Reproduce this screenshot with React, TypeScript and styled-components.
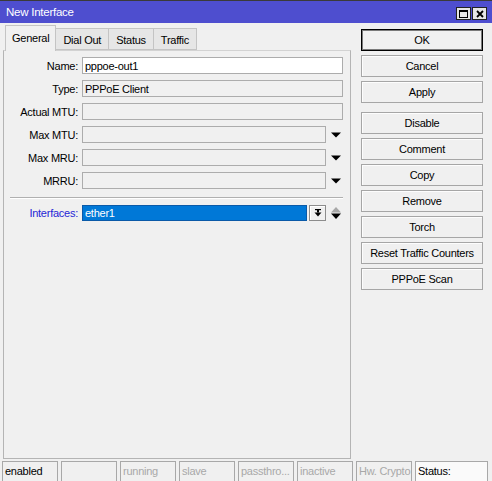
import React from "react";
import styled, { createGlobalStyle } from "styled-components";

const GlobalStyle = createGlobalStyle`
  html, body {
    margin: 0;
    padding: 0;
    background: #f0f0f0;
  }
  body {
    font-family: "Liberation Sans", Arial, sans-serif;
    font-size: 11px;
    letter-spacing: -0.25px;
    color: #000;
  }
  svg {
    display: block;
    flex-shrink: 0;
  }
`;

const Window = styled.div`
  width: 492px;
  height: 481px;
  display: flex;
  flex-direction: column;
  overflow: hidden;
  background: #f0f0f0;
`;

const TitleBar = styled.div`
  height: 22px;
  border-top: 1px solid #3a3a3a;
  background: #4e4ecf;
  display: flex;
  align-items: center;
  justify-content: space-between;
  padding: 0 5px 0 6px;
`;

const Title = styled.span`
  color: #fff;
  font-size: 11.5px;
  margin-top: -1px;
`;

const TitleButtons = styled.div`
  display: flex;
  gap: 1px;
  margin-top: 3px;
`;

const TitleBtn = styled.div`
  width: 13px;
  height: 11px;
  border: 1px solid #222;
  background: #e6e6e6;
  display: flex;
  align-items: center;
  justify-content: center;
`;

const Body = styled.div`
  flex: 1;
  display: flex;
  min-height: 0;
`;

const LeftColumn = styled.div`
  width: 348px;
  margin-left: 3px;
  padding: 1px 0 2px;
  display: flex;
  flex-direction: column;
`;

const TabStrip = styled.div`
  height: 26px;
  display: flex;
  align-items: flex-end;
  padding-left: 2px;
`;

const Tab = styled.div<{ $active?: boolean }>`
  position: relative;
  z-index: ${(p) => (p.$active ? 2 : 1)};
  height: ${(p) => (p.$active ? "26px" : "22px")};
  margin-bottom: ${(p) => (p.$active ? "-1px" : "0")};
  margin-left: ${(p) => (p.$active ? "0" : "-1px")};
  padding: ${(p) => (p.$active ? "0 6px 2px" : "1px 7px 0 7px")};
  display: flex;
  align-items: center;
  box-sizing: border-box;
  border: 1px solid #c4c4c4;
  border-bottom: ${(p) => (p.$active ? "none" : "1px solid #c4c4c4")};
  background: ${(p) => (p.$active ? "#f0f0f0" : "#e6e6e6")};
  font-size: 11px;
`;

const Panel = styled.div`
  flex: 1;
  border: 1px solid #b4b4b4;
  border-top-color: #d2d2d2;
  padding: 6px 7px 0 0;
  display: flex;
  flex-direction: column;
`;

const FieldRow = styled.div<{ $gap?: number; $height?: number }>`
  display: flex;
  align-items: center;
  height: ${(p) => p.$height ?? 17}px;
  margin-top: ${(p) => p.$gap ?? 6}px;
`;

const Label = styled.div<{ $accent?: boolean }>`
  width: 74px;
  flex-shrink: 0;
  margin-right: 4px;
  text-align: right;
  white-space: nowrap;
  color: ${(p) => (p.$accent ? "#2626d6" : "#000")};
`;

const Input = styled.div<{ $editable?: boolean }>`
  flex: 1;
  height: 100%;
  box-sizing: border-box;
  border: 1px solid #acacac;
  background: ${(p) => (p.$editable ? "#fff" : "#f0f0f0")};
  padding-left: 2px;
  display: flex;
  align-items: center;
  white-space: nowrap;
`;

const ArrowSlot = styled.div`
  width: 17px;
  flex-shrink: 0;
  height: 100%;
  display: flex;
  align-items: center;
  padding-left: 5px;
  box-sizing: border-box;
`;

const Separator = styled.div`
  margin: 8px 0 0 6px;
  height: 1px;
  background: #b0b0b0;
  border-bottom: 1px solid #fff;
`;

const SelectField = styled.div`
  flex: 1;
  height: 100%;
  box-sizing: border-box;
  border: 1px solid #0a5aa8;
  background: #0078d7;
  color: #fff;
  padding-left: 2px;
  display: flex;
  align-items: center;
`;

const PickButton = styled.div`
  width: 17px;
  flex-shrink: 0;
  height: 100%;
  margin-left: 2px;
  box-sizing: border-box;
  border: 1px solid #8c8c8c;
  box-shadow: inset 1px 1px 0 #fff;
  background: #f0f0f0;
  display: flex;
  align-items: center;
  justify-content: center;
`;

const Spinner = styled.div`
  width: 17px;
  flex-shrink: 0;
  height: 100%;
  display: flex;
  align-items: center;
  padding-left: 5px;
  box-sizing: border-box;
`;

const ButtonColumn = styled.div`
  width: 122px;
  margin-left: 10px;
  padding-top: 6px;
  display: flex;
  flex-direction: column;
`;

const ButtonGroup = styled.div<{ $spaced?: boolean }>`
  display: flex;
  flex-direction: column;
  gap: 4px;
  margin-top: ${(p) => (p.$spaced ? "9px" : "0")};
`;

const Button = styled.div<{ $default?: boolean }>`
  height: 22px;
  box-sizing: border-box;
  border: 1px solid ${(p) => (p.$default ? "#000" : "#a6a6a6")};
  box-shadow: ${(p) =>
    p.$default ? "inset 0 0 0 1px #7a7a7a" : "inset 1px 1px 0 #fdfdfd"};
  background: #f0f0f0;
  display: flex;
  align-items: center;
  justify-content: center;
  white-space: nowrap;
`;

const StatusBar = styled.div`
  height: 20px;
  display: flex;
  gap: 3px;
  padding-left: 2px;
`;

const StatusCell = styled.div<{ $dim?: boolean; $wide?: boolean }>`
  width: ${(p) => (p.$wide ? "73px" : "56px")};
  box-sizing: border-box;
  border: 1px solid #a8a8a8;
  border-bottom: none;
  background: ${(p) => (p.$wide ? "#fafafa" : "#f0f0f0")};
  color: ${(p) => (p.$dim ? "#a8a8a8" : "#000")};
  padding: 3px 0 0 2px;
  white-space: nowrap;
  overflow: hidden;
  font-size: 11px;
`;

const DownArrow = () => (
  <svg width="10" height="6" viewBox="0 0 10 6">
    <polygon points="0,0.5 10,0.5 5,5.5" fill="#000" />
  </svg>
);

const UpDown = () => (
  <svg width="10" height="12" viewBox="0 0 10 12">
    <polygon points="5,0 10,5.5 0,5.5" fill="#a8a8a8" />
    <polygon points="0,6.5 10,6.5 5,12" fill="#000" />
  </svg>
);

const PickIcon = () => (
  <svg width="8" height="8" viewBox="0 0 8 8">
    <rect x="1" y="0" width="6" height="1.2" fill="#000" />
    <rect x="3" y="1" width="2" height="2.5" fill="#000" />
    <polygon points="0.5,3.5 7.5,3.5 4,7.5" fill="#000" />
  </svg>
);

const fields = [
  { label: "Name:", value: "pppoe-out1", editable: true, arrow: false },
  { label: "Type:", value: "PPPoE Client", editable: false, arrow: false },
  { label: "Actual MTU:", value: "", editable: false, arrow: false },
  { label: "Max MTU:", value: "", editable: false, arrow: true },
  { label: "Max MRU:", value: "", editable: false, arrow: true },
  { label: "MRRU:", value: "", editable: false, arrow: true },
];

const tabs = ["General", "Dial Out", "Status", "Traffic"];

const statusCells = [
  { text: "enabled", dim: false },
  { text: "", dim: false },
  { text: "running", dim: true },
  { text: "slave", dim: true },
  { text: "passthro...", dim: true },
  { text: "inactive", dim: true },
  { text: "Hw. Crypto", dim: true },
];

function App() {
  return (
    <>
      <GlobalStyle />
      <Window>
        <TitleBar>
          <Title>New Interface</Title>
          <TitleButtons>
            <TitleBtn>
              <svg width="9" height="8" viewBox="0 0 9 8">
                <rect x="0.5" y="0.5" width="8" height="7" fill="none" stroke="#000" />
                <rect x="0.5" y="0.5" width="8" height="1.5" fill="#000" />
              </svg>
            </TitleBtn>
            <TitleBtn>
              <svg width="8" height="8" viewBox="0 0 8 8">
                <path d="M1 1 L7 7 M7 1 L1 7" stroke="#000" strokeWidth="1.8" />
              </svg>
            </TitleBtn>
          </TitleButtons>
        </TitleBar>

        <Body>
          <LeftColumn>
            <TabStrip>
              {tabs.map((t, i) => (
                <Tab key={t} $active={i === 0}>
                  {t}
                </Tab>
              ))}
            </TabStrip>
            <Panel>
              {fields.map((f, i) => (
                <FieldRow key={f.label} $gap={i === 0 ? 0 : 6}>
                  <Label>{f.label}</Label>
                  <Input $editable={f.editable}>{f.value}</Input>
                  {f.arrow && (
                    <ArrowSlot>
                      <DownArrow />
                    </ArrowSlot>
                  )}
                </FieldRow>
              ))}
              <Separator />
              <FieldRow $gap={6} $height={16}>
                <Label $accent>Interfaces:</Label>
                <SelectField>ether1</SelectField>
                <PickButton>
                  <PickIcon />
                </PickButton>
                <Spinner>
                  <UpDown />
                </Spinner>
              </FieldRow>
            </Panel>
          </LeftColumn>

          <ButtonColumn>
            <ButtonGroup>
              <Button $default>OK</Button>
              <Button>Cancel</Button>
              <Button>Apply</Button>
            </ButtonGroup>
            <ButtonGroup $spaced>
              <Button>Disable</Button>
              <Button>Comment</Button>
              <Button>Copy</Button>
              <Button>Remove</Button>
              <Button>Torch</Button>
              <Button>Reset Traffic Counters</Button>
              <Button>PPPoE Scan</Button>
            </ButtonGroup>
          </ButtonColumn>
        </Body>

        <StatusBar>
          {statusCells.map((c, i) => (
            <StatusCell key={i} $dim={c.dim}>
              {c.text}
            </StatusCell>
          ))}
          <StatusCell $wide>Status:</StatusCell>
        </StatusBar>
      </Window>
    </>
  );
}

export default App;
